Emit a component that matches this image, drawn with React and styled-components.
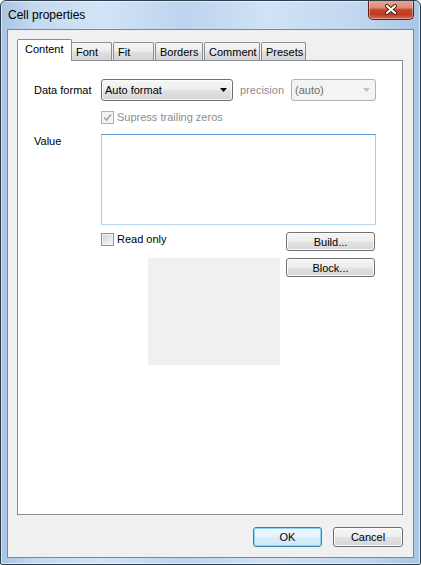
import React from "react";
import styled, { createGlobalStyle } from "styled-components";

const GlobalStyle = createGlobalStyle`
  html, body {
    margin: 0;
    padding: 0;
    background: #ffffff;
  }
  body {
    font-family: "Liberation Sans", Arial, sans-serif;
    font-size: 11px;
    color: #000;
  }
  #root {
    width: 421px;
    height: 565px;
  }
`;

const buttonFace = "linear-gradient(#f6f6f6 0%, #eeeeee 48%, #e2e2e2 52%, #d6d6d6 100%)";

const Window = styled.div`
  width: 421px;
  height: 565px;
  box-sizing: border-box;
  border: 1px solid #2f3c4a;
  border-radius: 6px 6px 2px 2px;
  background: linear-gradient(
    to right,
    #a9c5e3 0%,
    #c3d9f0 8%,
    #d2e4f7 24%,
    #bcd4ee 44%,
    #d0e3f6 64%,
    #c2d8f0 84%,
    #a9c6e6 100%
  );
  box-shadow: inset 0 0 0 1px rgba(255, 255, 255, 0.55);
  display: flex;
  flex-direction: column;
  overflow: hidden;
`;

const TitleBar = styled.div`
  height: 28px;
  flex-shrink: 0;
  display: flex;
  align-items: flex-start;
`;

const Title = styled.div`
  padding: 7px 0 0 7px;
  font-size: 12px;
  line-height: 14px;
  color: #000;
`;

const CloseButton = styled.div`
  margin: -1px 6px 0 auto;
  width: 46px;
  height: 20px;
  box-sizing: border-box;
  border: 1px solid #5f2417;
  border-top: none;
  border-radius: 0 0 5px 5px;
  background: linear-gradient(#eaa999 0%, #dd8a77 40%, #c8452c 52%, #c03a22 75%, #d46a50 100%);
  box-shadow: inset 0 0 0 1px rgba(255, 255, 255, 0.35);
  display: flex;
  align-items: center;
  justify-content: center;
`;

const Client = styled.div`
  flex: 1;
  min-height: 0;
  margin: 0 6px 6px;
  border: 1px solid #7a8796;
  background: #f0f0f0;
  padding: 9px 10px 10px 9px;
  display: flex;
  flex-direction: column;
`;

const TabStrip = styled.div`
  display: flex;
  align-items: flex-end;
  gap: 1px;
  height: 21px;
  flex-shrink: 0;
`;

const Tab = styled.div`
  position: relative;
  z-index: ${(p) => (p.$active ? 2 : 1)};
  box-sizing: border-box;
  width: ${(p) => p.$w}px;
  height: ${(p) => (p.$active ? 22 : 18)}px;
  margin-bottom: ${(p) => (p.$active ? -1 : 0)}px;
  margin-right: ${(p) => (p.$active ? -2 : 0)}px;
  padding: 0 0 ${(p) => (p.$active ? 3 : 0)}px ${(p) => (p.$active ? 7 : 4)}px;
  border: 1px solid #898c95;
  border-bottom: none;
  border-radius: 2px 2px 0 0;
  background: ${(p) =>
    p.$active ? "#ffffff" : "linear-gradient(#f5f5f5 0%, #ededed 45%, #e0e0e0 55%, #d4d4d4 100%)"};
  display: flex;
  align-items: center;
  white-space: nowrap;
`;

const Panel = styled.div`
  flex: 1;
  min-height: 0;
  border: 1px solid #898c95;
  background: #ffffff;
  padding: 18px 0 0 16px;
  display: flex;
  flex-direction: column;
`;

const Row = styled.div`
  display: flex;
  align-items: ${(p) => p.$align || "center"};
  margin-top: ${(p) => p.$top || 0}px;
  padding-left: ${(p) => p.$indent || 0}px;
`;

const Label = styled.span`
  width: ${(p) => p.$w || 67}px;
  flex-shrink: 0;
  color: ${(p) => (p.$muted ? "#8d8d8d" : "#000")};
  line-height: 14px;
  margin-left: ${(p) => p.$left || 0}px;
`;

const Combo = styled.div`
  width: ${(p) => p.$w}px;
  height: 22px;
  box-sizing: border-box;
  border: 1px solid ${(p) => (p.$disabled ? "#adb2b5" : "#707070")};
  border-radius: 3px;
  background: ${(p) => (p.$disabled ? "#f4f4f4" : buttonFace)};
  box-shadow: inset 0 0 0 1px ${(p) => (p.$disabled ? "#f4f4f4" : "rgba(255,255,255,0.7)")};
  color: ${(p) => (p.$disabled ? "#6d6d6d" : "#000")};
  padding: 0 5px 0 3px;
  display: flex;
  align-items: center;
  justify-content: space-between;
`;

const CheckRow = styled.label`
  display: flex;
  align-items: center;
  gap: 3px;
  color: ${(p) => (p.$disabled ? "#8d8d8d" : "#000")};
  height: 14px;
`;

const CheckBox = styled.span`
  width: 13px;
  height: 13px;
  box-sizing: border-box;
  border: 1px solid ${(p) => (p.$disabled ? "#b1b1b1" : "#8e8f8f")};
  background: ${(p) => (p.$disabled ? "#f4f4f4" : "linear-gradient(135deg, #c9cdd3 0%, #eceded 70%, #f7f7f7 100%)")};
  box-shadow: inset 0 0 0 1px #f4f4f4;
  display: flex;
  align-items: center;
  justify-content: center;
`;

const ValueBox = styled.textarea`
  width: 275px;
  height: 91px;
  box-sizing: border-box;
  margin: 0;
  padding: 2px;
  resize: none;
  outline: none;
  border: 1px solid #a9cbe8;
  border-top-color: #5c9ad2;
  border-bottom-color: #b9d7ef;
  background: #fff;
  font: inherit;
`;

const Lower = styled.div`
  display: flex;
  margin-top: 7px;
  padding-left: 67px;
`;

const LeftCol = styled.div`
  width: 179px;
  display: flex;
  flex-direction: column;
`;

const Preview = styled.div`
  width: 132px;
  height: 107px;
  margin: 12px 0 0 47px;
  background: #f0f0f0;
`;

const ButtonCol = styled.div`
  margin-left: 6px;
  display: flex;
  flex-direction: column;
  gap: 7px;
`;

const Button = styled.button`
  width: ${(p) => p.$w}px;
  height: ${(p) => p.$h}px;
  box-sizing: border-box;
  padding: 0;
  margin: 0;
  font: inherit;
  color: #000;
  border: 1px solid ${(p) => (p.$default ? "#3c7fb1" : "#707070")};
  border-radius: 3px;
  background: ${(p) =>
    p.$default ? "linear-gradient(#f0f8fd 0%, #e6f4fc 48%, #d9eefa 52%, #cde7f8 100%)" : buttonFace};
  box-shadow: inset 0 0 0 1px ${(p) => (p.$default ? "#8fd4f5" : "#fcfcfc")};
`;

const Footer = styled.div`
  display: flex;
  justify-content: flex-end;
  gap: 11px;
  margin-top: 12px;
  flex-shrink: 0;
`;

const Arrow = ({ color }) => (
  <svg width="7" height="4" viewBox="0 0 7 4">
    <polygon points="0,0 7,0 3.5,4" fill={color} />
  </svg>
);

const CloseGlyph = () => (
  <svg width="14" height="11" viewBox="0 0 14 11">
    <path d="M3 2 L11 9 M11 2 L3 9" stroke="#4a1a10" strokeWidth="4" strokeLinecap="round" />
    <path d="M3 2 L11 9 M11 2 L3 9" stroke="#ffffff" strokeWidth="2.2" strokeLinecap="round" />
  </svg>
);

const Check = () => (
  <svg width="9" height="9" viewBox="0 0 9 9">
    <path d="M1 4.5 L3.5 7 L8 1.5" stroke="#a3a3a3" strokeWidth="1.7" fill="none" />
  </svg>
);

const tabs = [
  { name: "Content", w: 55, active: true },
  { name: "Font", w: 41 },
  { name: "Fit", w: 41 },
  { name: "Borders", w: 48 },
  { name: "Comment", w: 56 },
  { name: "Presets", w: 45 },
];

export default function App() {
  return (
    <>
      <GlobalStyle />
      <Window>
        <TitleBar>
          <Title>Cell properties</Title>
          <CloseButton>
            <CloseGlyph />
          </CloseButton>
        </TitleBar>
        <Client>
          <TabStrip>
            {tabs.map((t) => (
              <Tab key={t.name} $w={t.w} $active={t.active}>
                {t.name}
              </Tab>
            ))}
          </TabStrip>
          <Panel>
            <Row>
              <Label>Data format</Label>
              <Combo $w={132}>
                <span>Auto format</span>
                <Arrow color="#000" />
              </Combo>
              <Label $muted $w={51} $left={7}>
                precision
              </Label>
              <Combo $w={85} $disabled>
                <span>(auto)</span>
                <Arrow color="#c2c2c2" />
              </Combo>
            </Row>
            <Row $top={9} $indent={67}>
              <CheckRow $disabled>
                <CheckBox $disabled>
                  <Check />
                </CheckBox>
                Supress trailing zeros
              </CheckRow>
            </Row>
            <Row $top={10} $align="flex-start">
              <Label>Value</Label>
              <ValueBox />
            </Row>
            <Lower>
              <LeftCol>
                <CheckRow>
                  <CheckBox />
                  Read only
                </CheckRow>
                <Preview />
              </LeftCol>
              <ButtonCol>
                <Button $w={89} $h={19}>Build...</Button>
                <Button $w={89} $h={19}>Block...</Button>
              </ButtonCol>
            </Lower>
          </Panel>
          <Footer>
            <Button $w={69} $h={20} $default>
              OK
            </Button>
            <Button $w={70} $h={20}>Cancel</Button>
          </Footer>
        </Client>
      </Window>
    </>
  );
}
